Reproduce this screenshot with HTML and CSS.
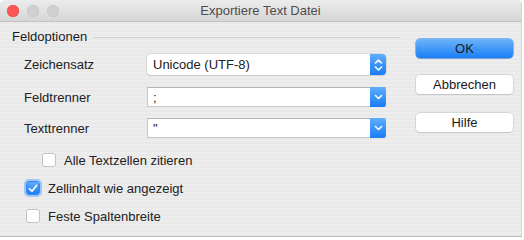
FILE: index.html
```html
<!DOCTYPE html>
<html lang="de">
  <head>
    <meta charset="UTF-8" />
    <title>Exportiere Text Datei</title>
    <link rel="stylesheet" href="styles.css">
  </head>
  <body>
    <div class="window">
      <div class="titlebar">
        <div class="lights">
          <span class="light close"></span>
          <span class="light"></span>
          <span class="light"></span>
        </div>
        <div class="title">Exportiere Text Datei</div>
      </div>

      <div class="content">
        <div class="main">
          <div class="group-title">
            <span>Feldoptionen</span>
            <span class="rule"></span>
          </div>

          <div class="fields">
            <div class="row row-select">
              <label>Zeichensatz</label>
              <div class="select">
                <span class="value">Unicode (UTF-8)</span>
                <span class="stepper">
                  <svg width="9" height="14" viewBox="0 0 9 14">
                    <path d="M1.5 5 L4.5 2 L7.5 5 M1.5 9 L4.5 12 L7.5 9" fill="none" stroke="#fff" stroke-width="1.6" stroke-linecap="round" stroke-linejoin="round"/>
                  </svg>
                </span>
              </div>
            </div>
            <div class="row row-combo">
              <label>Feldtrenner</label>
              <div class="combo">
                <span class="value">;</span>
                <span class="arrow">
                  <svg width="9" height="6" viewBox="0 0 9 6">
                    <path d="M1.5 1.5 L4.5 4.5 L7.5 1.5" fill="none" stroke="#fff" stroke-width="1.6" stroke-linecap="round" stroke-linejoin="round"/>
                  </svg>
                </span>
              </div>
            </div>
            <div class="row row-combo">
              <label>Texttrenner</label>
              <div class="combo">
                <span class="value">"</span>
                <span class="arrow">
                  <svg width="9" height="6" viewBox="0 0 9 6">
                    <path d="M1.5 1.5 L4.5 4.5 L7.5 1.5" fill="none" stroke="#fff" stroke-width="1.6" stroke-linecap="round" stroke-linejoin="round"/>
                  </svg>
                </span>
              </div>
            </div>
          </div>

          <div class="checks">
            <div class="check indent">
              <span class="box"></span>
              <span>Alle Textzellen zitieren</span>
            </div>
            <div class="check">
              <span class="box checked">
                <svg width="10" height="9" viewBox="0 0 10 9">
                  <path d="M1.5 4.8 L4 7.2 L8.5 1.5" fill="none" stroke="#fff" stroke-width="1.7" stroke-linecap="round" stroke-linejoin="round"/>
                </svg>
              </span>
              <span>Zellinhalt wie angezeigt</span>
            </div>
            <div class="check">
              <span class="box"></span>
              <span>Feste Spaltenbreite</span>
            </div>
          </div>
        </div>

        <div class="side">
          <button class="btn primary">OK</button>
          <button class="btn">Abbrechen</button>
          <button class="btn">Hilfe</button>
        </div>
      </div>
    </div>
  </body>
</html>
```

FILE: styles.css
```css
/* General Styles */
body {
  margin: 0;
  padding: 0;
  background: #fff;
  font-family: "Liberation Sans", Arial, sans-serif;
  font-size: 13px;
  color: #222;
}

.window {
  width: 521px;
  height: 236px;
  border-radius: 5px 5px 0 0;
  border-bottom: 1px solid #b8b8b8;
  border-right: 1px solid #d4d4d4;
  overflow: hidden;
  background-color: #ececec;
  background-image: repeating-linear-gradient(
    to bottom,
    #ededed 0,
    #ededed 2px,
    #e9e9e9 2px,
    #e9e9e9 4px
  );
}

/* Title bar */
.titlebar {
  height: 22px;
  box-sizing: border-box;
  border-bottom: 1px solid #c4c4c4;
  background: linear-gradient(to bottom, #ececec, #d6d6d6);
  display: flex;
  align-items: center;
  position: relative;
}

.lights {
  display: flex;
  gap: 8px;
  padding-left: 7px;
}

.light {
  width: 12px;
  height: 12px;
  border-radius: 50%;
  background: #d0d0d0;
  box-shadow: inset 0 0 0 0.5px #c2c2c2;
}

.light.close {
  background: #fc5753;
  box-shadow: inset 0 0 0 0.5px #df4744;
}

.title {
  position: absolute;
  left: 0;
  right: 0;
  text-align: center;
  color: #4d4d4d;
  font-size: 13px;
}

/* Content */
.content {
  display: flex;
  padding-left: 12px;
}

.main {
  width: 388px;
}

.group-title {
  display: flex;
  align-items: center;
  gap: 6px;
  margin-top: 6px;
  height: 16px;
  color: #1a1a1a;
}

.rule {
  flex: 1;
  border-top: 1px solid #d2d2d2;
  margin-top: 2px;
}

.fields {
  padding-left: 12px;
  margin-top: 10px;
}

.row {
  display: flex;
  align-items: center;
}

.row label {
  width: 123px;
}

.row-combo {
  margin-top: 12px;
}

.row-combo + .row-combo {
  margin-top: 11px;
}

.select,
.combo {
  width: 239px;
  box-sizing: border-box;
  display: flex;
  align-items: stretch;
  background: #fff;
}

.select {
  height: 21px;
  border-radius: 4px;
  box-shadow: 0 0 0 0.5px #c6c6c6, 0 1px 1px rgba(0, 0, 0, 0.12);
}

.combo {
  height: 20px;
  border: 1px solid #c8c8c8;
  border-right: none;
  border-top-color: #b5b5b5;
}

.value {
  flex: 1;
  display: flex;
  align-items: center;
  padding-left: 5px;
  font-size: 13px;
}

.select .value {
  padding-left: 6px;
}

.stepper,
.arrow {
  width: 16px;
  display: flex;
  align-items: center;
  justify-content: center;
  background: linear-gradient(to bottom, #5fadfb, #1a7cf5);
}

.stepper {
  border-radius: 0 4px 4px 0;
}

.arrow {
  border-radius: 0 3px 3px 0;
  margin-top: -1px;
  margin-bottom: -1px;
}

/* Checkboxes */
.checks {
  margin-top: 15px;
}

.check {
  display: flex;
  align-items: center;
  gap: 8px;
  height: 14px;
  padding-left: 14px;
  margin-bottom: 14px;
}

.check.indent {
  padding-left: 30px;
}

.box {
  width: 14px;
  height: 14px;
  box-sizing: border-box;
  border-radius: 3px;
  background: #fff;
  border: 1px solid #c3c3c3;
  display: flex;
  align-items: center;
  justify-content: center;
}

.box.checked {
  background: linear-gradient(to bottom, #62acfb, #1c7ef5);
  border-color: #2f86f0;
  box-shadow: 0 0 0 2px #9ec7f7;
}

/* Buttons */
.side {
  display: flex;
  flex-direction: column;
  margin-left: 16px;
  padding-top: 17px;
}

.btn {
  width: 97px;
  height: 19px;
  margin: 0 0 17px;
  padding: 0;
  font-family: "Liberation Sans", Arial, sans-serif;
  font-size: 13px;
  color: #1a1a1a;
  background: #fff;
  border: none;
  border-radius: 4px;
  box-shadow: 0 0 0 0.5px #c2c2c2, 0 1px 1px rgba(0, 0, 0, 0.15);
}

.btn.primary {
  background: linear-gradient(to bottom, #6cb3fa, #1b7ff6);
  box-shadow: 0 0 0 0.5px #2a7de8, 0 1px 1px rgba(0, 0, 0, 0.15);
}

.btn + .btn + .btn {
  margin-top: 2px;
}
```
